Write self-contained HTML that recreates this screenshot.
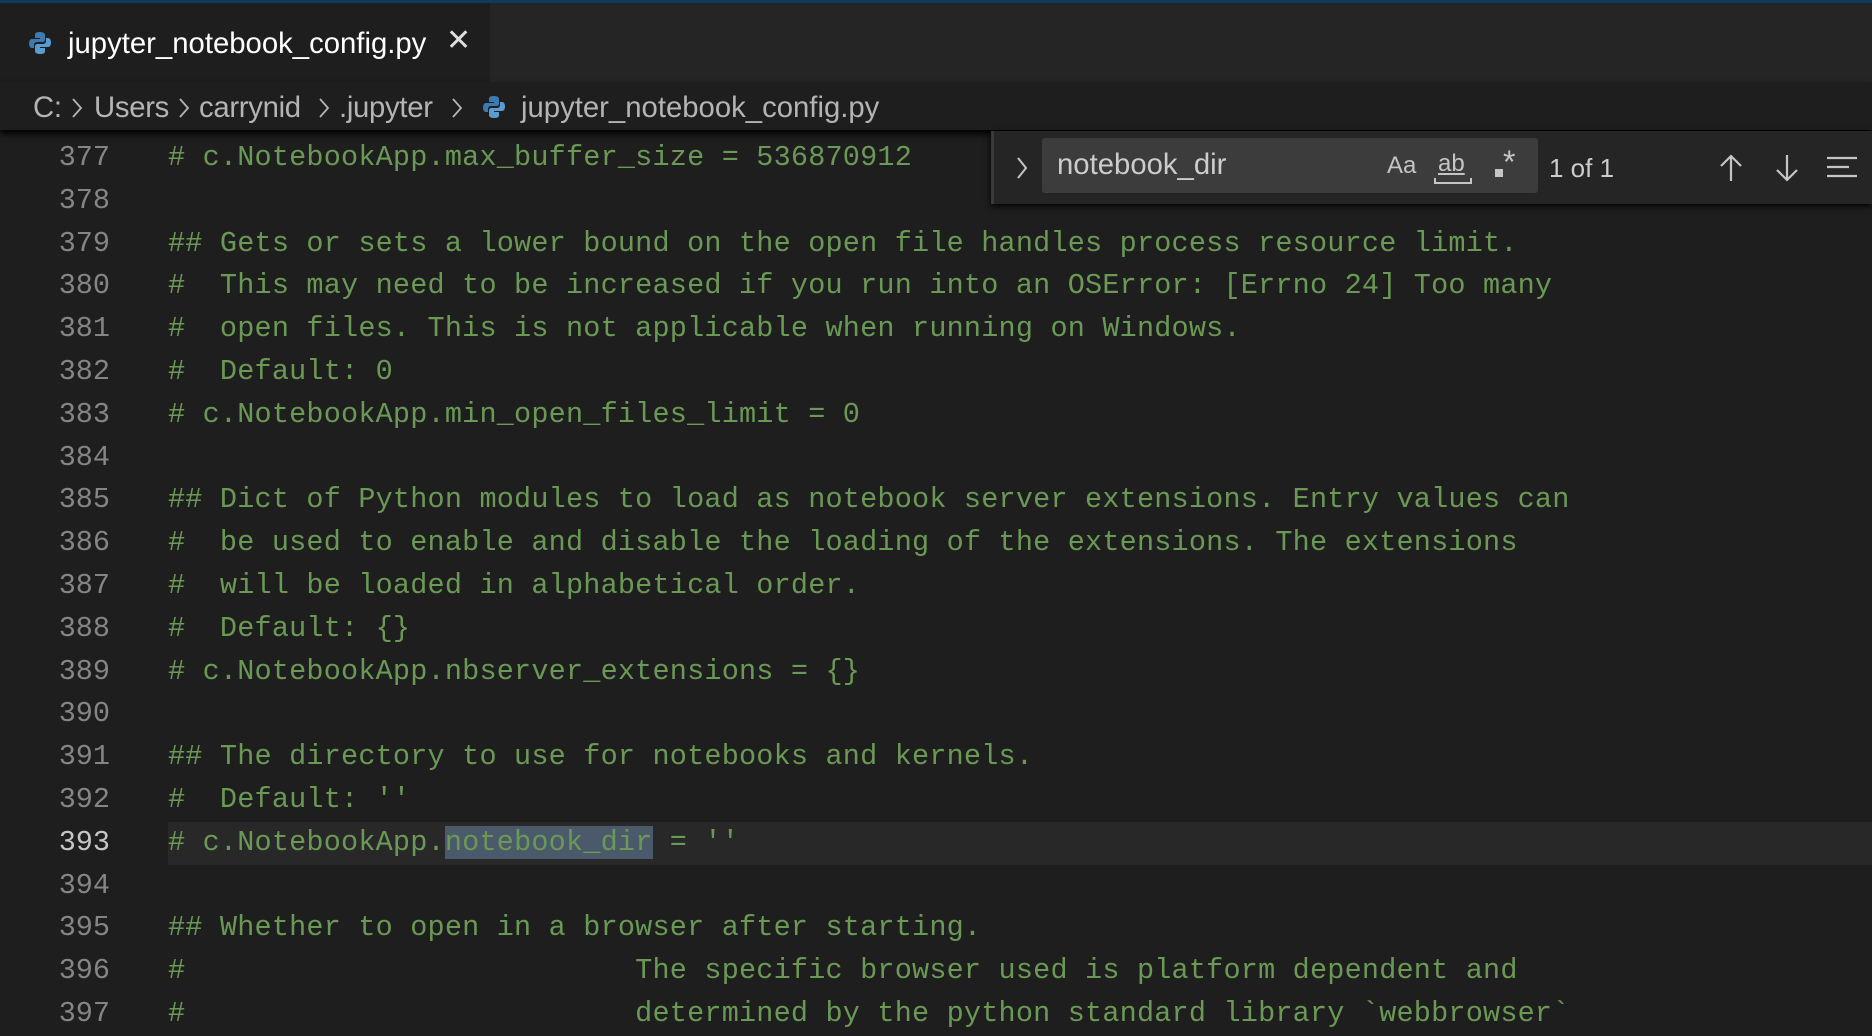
<!DOCTYPE html>
<html><head><meta charset="utf-8"><style>
*{margin:0;padding:0;box-sizing:border-box}
body{width:1872px;height:1012px;overflow:hidden;background:#1e1e1e;position:relative;font-family:"Liberation Sans",sans-serif}
.topline{position:absolute;left:0;top:0;width:1872px;height:3px;background:#0e3a5e}
.tabbar{position:absolute;left:0;top:3px;width:1872px;height:79px;background:#252526}
.tab{position:absolute;left:0;top:0;width:490px;height:79px;background:#1e1e1e}
.tab .t{position:absolute;left:68px;top:24px;font-size:29.3px;color:#fff}
.tab .x{position:absolute;left:446px;top:20px;font-size:30px;color:#ddd}
.py{position:absolute}
.bc{position:absolute;left:0;top:82px;width:1872px;height:48px;background:#1e1e1e;box-shadow:0 4px 6px #000;z-index:2}
.bc span{position:absolute;top:9px;font-size:29.3px;color:#b4b4b4;letter-spacing:-0.3px}
.bc svg.ch{position:absolute;top:15px}
.code{position:absolute;left:0;top:137px;width:1872px}
.ln{height:42.8px;position:relative;font-family:"Liberation Mono",monospace;font-size:28.5px;line-height:42.8px;white-space:pre}
.num{position:absolute;right:1762px;color:#858585}
.txt{position:absolute;left:168px;color:#6a9955;letter-spacing:0.2px}
.cur{background:#282828}
.sel{background:#4b5a6b}
.find{position:absolute;left:991px;top:131px;width:881px;height:73px;background:#252526;box-shadow:0 2px 6px #000;border-left:3px solid #3a3a3a;z-index:3}
.inp{position:absolute;left:48px;top:7px;width:496px;height:55px;background:#3c3c3c;border-radius:3px}
.inp .v{position:absolute;left:15px;top:10px;font-size:29.3px;color:#ccc}
.ic{position:absolute;color:#c5c5c5;font-size:24px}
</style></head><body>
<div class="topline"></div>
<div class="tabbar"><div class="tab">
<svg class="py" style="left:28px;top:28px" width="24" height="24" viewBox="0 0 24 24"><path d="M11.5 1C7 1 7 3 7 4v3h5v1H4C2 8 1 10 1 12.5S2 17 4 17h2v-3c0-2 1.5-3 3.5-3h5c1.5 0 2.5-1 2.5-2.5V4c0-2-2-3-5.5-3z" fill="#3c7ab0"/><path d="M12.5 23c4.5 0 4.5-2 4.5-3v-3h-5v-1h8c2 0 3-2 3-4.5S22 7 20 7h-2v3c0 2-1.5 3-3.5 3h-5C8 13 7 14 7 15.5V20c0 2 2 3 5.5 3z" fill="#5a9ccf"/></svg>
<div class="t">jupyter_notebook_config.py</div><div class="x">✕</div></div></div>
<div class="bc">
<span style="left:33px">C:</span><svg class="ch" style="left:71px" width="12" height="22" viewBox="0 0 12 22"><path d="M2 2l8 9-8 9" stroke="#b4b4b4" stroke-width="1.8" fill="none"/></svg>
<span style="left:94px">Users</span><svg class="ch" style="left:178px" width="12" height="22" viewBox="0 0 12 22"><path d="M2 2l8 9-8 9" stroke="#b4b4b4" stroke-width="1.8" fill="none"/></svg>
<span style="left:199px">carrynid</span><svg class="ch" style="left:318px" width="12" height="22" viewBox="0 0 12 22"><path d="M2 2l8 9-8 9" stroke="#b4b4b4" stroke-width="1.8" fill="none"/></svg>
<span style="left:339px">.jupyter</span><svg class="ch" style="left:451px" width="12" height="22" viewBox="0 0 12 22"><path d="M2 2l8 9-8 9" stroke="#b4b4b4" stroke-width="1.8" fill="none"/></svg>
<svg class="py" style="left:482px;top:13px" width="24" height="24" viewBox="0 0 24 24"><path d="M11.5 1C7 1 7 3 7 4v3h5v1H4C2 8 1 10 1 12.5S2 17 4 17h2v-3c0-2 1.5-3 3.5-3h5c1.5 0 2.5-1 2.5-2.5V4c0-2-2-3-5.5-3z" fill="#3c7ab0"/><path d="M12.5 23c4.5 0 4.5-2 4.5-3v-3h-5v-1h8c2 0 3-2 3-4.5S22 7 20 7h-2v3c0 2-1.5 3-3.5 3h-5C8 13 7 14 7 15.5V20c0 2 2 3 5.5 3z" fill="#5a9ccf"/></svg>
<span style="left:521px;letter-spacing:0">jupyter_notebook_config.py</span>
</div>
<div class="code">
<div class="ln"><span class="num">377</span><span class="txt"># c.NotebookApp.max_buffer_size = 536870912</span></div>
<div class="ln"><span class="num">378</span></div>
<div class="ln"><span class="num">379</span><span class="txt">## Gets or sets a lower bound on the open file handles process resource limit.</span></div>
<div class="ln"><span class="num">380</span><span class="txt">#  This may need to be increased if you run into an OSError: [Errno 24] Too many</span></div>
<div class="ln"><span class="num">381</span><span class="txt">#  open files. This is not applicable when running on Windows.</span></div>
<div class="ln"><span class="num">382</span><span class="txt">#  Default: 0</span></div>
<div class="ln"><span class="num">383</span><span class="txt"># c.NotebookApp.min_open_files_limit = 0</span></div>
<div class="ln"><span class="num">384</span></div>
<div class="ln"><span class="num">385</span><span class="txt">## Dict of Python modules to load as notebook server extensions. Entry values can</span></div>
<div class="ln"><span class="num">386</span><span class="txt">#  be used to enable and disable the loading of the extensions. The extensions</span></div>
<div class="ln"><span class="num">387</span><span class="txt">#  will be loaded in alphabetical order.</span></div>
<div class="ln"><span class="num">388</span><span class="txt">#  Default: {}</span></div>
<div class="ln"><span class="num">389</span><span class="txt"># c.NotebookApp.nbserver_extensions = {}</span></div>
<div class="ln"><span class="num">390</span></div>
<div class="ln"><span class="num">391</span><span class="txt">## The directory to use for notebooks and kernels.</span></div>
<div class="ln"><span class="num">392</span><span class="txt">#  Default: ''</span></div>
<div class="ln"><span class="num" style="color:#c6c6c6">393</span><div class="cur" style="position:absolute;left:168px;right:0;top:0;height:43px"></div><span class="txt"># c.NotebookApp.<span class="sel">notebook_dir</span> = ''</span></div>
<div class="ln"><span class="num">394</span></div>
<div class="ln"><span class="num">395</span><span class="txt">## Whether to open in a browser after starting.</span></div>
<div class="ln"><span class="num">396</span><span class="txt">#                          The specific browser used is platform dependent and</span></div>
<div class="ln"><span class="num">397</span><span class="txt">#                          determined by the python standard library `webbrowser`</span></div>
</div>
<div class="find">
<svg style="position:absolute;left:20px;top:24px" width="16" height="26" viewBox="0 0 16 26"><path d="M4 3l8 10-8 10" stroke="#c5c5c5" stroke-width="2" fill="none"/></svg>
<div class="inp"><div class="v">notebook_dir</div>
<div class="ic" style="left:345px;top:14px">Aa</div>
<div class="ic" style="left:396px;top:12px;text-decoration:underline">ab</div>
<div style="position:absolute;left:392px;top:40px;width:38px;height:6px;border:2px solid #c5c5c5;border-top:none"></div>
<div style="position:absolute;left:453px;top:31px;width:8px;height:8px;background:#c5c5c5"></div>
<div class="ic" style="left:461px;top:6px;font-size:32px">*</div>
</div>
<div class="ic" style="left:555px;top:22px;font-size:26px;color:#ccc">1 of 1</div>
<svg style="position:absolute;left:724px;top:22px" width="26" height="30" viewBox="0 0 26 30"><path d="M13 28V3M3 13L13 3l10 10" stroke="#c5c5c5" stroke-width="2.2" fill="none"/></svg>
<svg style="position:absolute;left:780px;top:22px" width="26" height="30" viewBox="0 0 26 30"><path d="M13 2v25M3 17l10 10 10-10" stroke="#c5c5c5" stroke-width="2.2" fill="none"/></svg>
<svg style="position:absolute;left:832px;top:24px" width="34" height="26" viewBox="0 0 34 26"><path d="M1 3h30M1 12h22M1 21h30" stroke="#c5c5c5" stroke-width="2.2" fill="none"/></svg>
</div>
</body></html>
